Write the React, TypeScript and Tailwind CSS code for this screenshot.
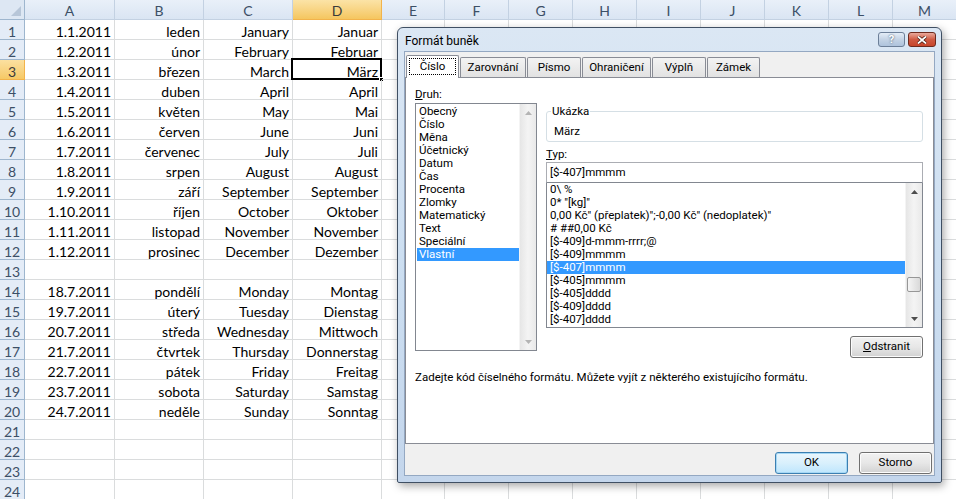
import React from "react";

const COLS = [
  { key: "A", w: "w-[90px]" },
  { key: "B", w: "w-[89px]" },
  { key: "C", w: "w-[89px]" },
  { key: "D", w: "w-[89px]" },
  { key: "E", w: "w-[63px]" },
  { key: "F", w: "w-[64px]" },
  { key: "G", w: "w-[64px]" },
  { key: "H", w: "w-[64px]" },
  { key: "I", w: "w-[64px]" },
  { key: "J", w: "w-[64px]" },
  { key: "K", w: "w-[64px]" },
  { key: "L", w: "w-[64px]" },
  { key: "M", w: "w-[64px]" },
];

const DATA: string[][] = [
  ["1.1.2011", "leden", "January", "Januar"],
  ["1.2.2011", "únor", "February", "Februar"],
  ["1.3.2011", "březen", "March", "März"],
  ["1.4.2011", "duben", "April", "April"],
  ["1.5.2011", "květen", "May", "Mai"],
  ["1.6.2011", "červen", "June", "Juni"],
  ["1.7.2011", "červenec", "July", "Juli"],
  ["1.8.2011", "srpen", "August", "August"],
  ["1.9.2011", "září", "September", "September"],
  ["1.10.2011", "říjen", "October", "Oktober"],
  ["1.11.2011", "listopad", "November", "November"],
  ["1.12.2011", "prosinec", "December", "Dezember"],
  [],
  ["18.7.2011", "pondělí", "Monday", "Montag"],
  ["19.7.2011", "úterý", "Tuesday", "Dienstag"],
  ["20.7.2011", "středa", "Wednesday", "Mittwoch"],
  ["21.7.2011", "čtvrtek", "Thursday", "Donnerstag"],
  ["22.7.2011", "pátek", "Friday", "Freitag"],
  ["23.7.2011", "sobota", "Saturday", "Samstag"],
  ["24.7.2011", "neděle", "Sunday", "Sonntag"],
  [],
  [],
  [],
  [],
];

const CATEGORIES = [
  "Obecný",
  "Číslo",
  "Měna",
  "Účetnický",
  "Datum",
  "Čas",
  "Procenta",
  "Zlomky",
  "Matematický",
  "Text",
  "Speciální",
  "Vlastní",
];

const FORMATS = [
  "0\\ %",
  '0* "[kg]"',
  '0,00 Kč" (přeplatek)";-0,00 Kč" (nedoplatek)"',
  "# ##0,00 Kč",
  "[$-409]d-mmm-rrrr;@",
  "[$-409]mmmm",
  "[$-407]mmmm",
  "[$-405]mmmm",
  "[$-405]dddd",
  "[$-409]dddd",
  "[$-407]dddd",
];

const TABS = [
  { label: "Číslo", w: "w-[53px]" },
  { label: "Zarovnání", w: "w-[66px]" },
  { label: "Písmo", w: "w-[54px]" },
  { label: "Ohraničení", w: "w-[69px]" },
  { label: "Výplň", w: "w-[54px]" },
  { label: "Zámek", w: "w-[53px]" },
];

function Arrow({ down, muted }: { down?: boolean; muted?: boolean }) {
  return (
    <svg width="7" height="4" viewBox="0 0 7 4" className={down ? "rotate-180" : ""}>
      <path d="M0 4 L3.5 0 L7 4 Z" fill={muted ? "#b4b4b4" : "#4d4d4d"} />
    </svg>
  );
}

function ScrollBar({ muted, thumb }: { muted?: boolean; thumb?: boolean }) {
  return (
    <div className="w-[17px] h-full flex flex-col bg-gradient-to-r from-[#e6e6e6] via-[#f4f4f4] to-[#e9e9e9] border-l border-[#f4f4f4]">
      <div className="h-[17px] flex items-center justify-center">
        <Arrow muted={muted} />
      </div>
      <div className="flex-1 flex flex-col justify-end pb-[18px]">
        {thumb && (
          <div className="mx-[1px] h-[15px] rounded-[2px] border border-[#979797] bg-gradient-to-r from-[#f5f5f5] to-[#d9d9d9]" />
        )}
      </div>
      <div className="h-[17px] flex items-center justify-center">
        <Arrow down muted={muted} />
      </div>
    </div>
  );
}

function WinButton({ children, focused, className = "" }: { children: React.ReactNode; focused?: boolean; className?: string }) {
  return (
    <div
      className={`w-[73px] h-[22px] rounded-[3px] border flex items-center justify-center text-black ${
        focused
          ? "border-[#3c7fb1] bg-gradient-to-b from-[#eaf6fd] via-[#d9f0fc] to-[#bee6fd] shadow-[inset_0_0_0_1px_#a6d8f5]"
          : "border-[#707070] bg-gradient-to-b from-[#f2f2f2] via-[#e7e7e7] to-[#d2d2d2] shadow-[inset_0_0_0_1px_#fcfcfc]"
      } ${className}`}
    >
      {children}
    </div>
  );
}

function Sheet() {
  return (
    <div className="flex flex-col font-['Lato',sans-serif] text-[14px] text-black">
      <div className="flex h-[20px]">
        <div className="w-[25px] shrink-0 border-r border-b border-[#9eb6ce] bg-[#dde7f3] flex items-end justify-end p-[3px]">
          <svg width="10" height="10" viewBox="0 0 10 10">
            <path d="M10 0 L10 10 L0 10 Z" fill="#b7c6d8" />
          </svg>
        </div>
        {COLS.map((c) => (
          <div
            key={c.key}
            className={`${c.w} shrink-0 border-r border-b text-center leading-[21px] ${
              c.key === "D"
                ? "bg-gradient-to-b from-[#fbe3a6] to-[#f5c65e] border-[#f2b34b] text-[#3b3b3b]"
                : "bg-gradient-to-b from-[#e9f0f9] to-[#dae5f3] border-[#c3d1e2] text-[#3c4f66]"
            }`}
          >
            {c.key}
          </div>
        ))}
      </div>
      {DATA.map((row, r) => (
        <div key={r} className="flex h-[20px]">
          <div
            className={`w-[25px] shrink-0 border-r border-b text-center leading-[23px] ${
              r === 2
                ? "bg-gradient-to-b from-[#fbe0a0] to-[#f6c965] border-[#f2b34b] text-[#3b3b3b]"
                : "bg-[#e4ecf7] border-[#9eb6ce] text-[#3c4f66]"
            }`}
          >
            {r + 1}
          </div>
          {COLS.map((c, ci) => (
            <div
              key={c.key}
              className={`${c.w} shrink-0 relative border-r border-b border-[#dadcdd] text-right pr-[3px] leading-[23px] whitespace-nowrap`}
            >
              {row[ci] ?? ""}
              {r === 2 && c.key === "D" && (
                <>
                  <div className="absolute -left-[2px] -top-[2px] -right-[1px] -bottom-[1px] border-2 border-black" />
                  <div className="absolute -right-[3px] -bottom-[3px] w-[5px] h-[5px] bg-black border border-white" />
                </>
              )}
            </div>
          ))}
        </div>
      ))}
    </div>
  );
}

function FormatDialog() {
  return (
    <div className="absolute left-[397px] top-[27px] w-[545px] h-[456px] flex flex-col rounded-t-[6px] rounded-b-[2px] border border-[#3f4f63] bg-gradient-to-b from-[#dbe7f4] via-[#cddff1] to-[#c4d6ec] shadow-[2px_3px_8px_rgba(0,0,0,0.35)] font-['Roboto',sans-serif] text-[11.5px] text-black">
      <div className="h-[23px] flex items-start pl-[7px] pr-[5px]">
        <div className="flex-1 leading-[26px] text-[12px]">Formát buněk</div>
        <div className="flex gap-[3px] pt-[4px]">
          <div className="w-[27px] h-[15px] rounded-[3px] border border-[#6c7f98] bg-gradient-to-b from-[#e4edf7] via-[#c4d3e5] to-[#aec3dc] flex items-center justify-center text-white font-bold text-[11px] leading-none [text-shadow:0_0_2px_#2b3d55]">
            ?
          </div>
          <div className="w-[28px] h-[15px] rounded-[3px] border border-[#6d2a1e] bg-gradient-to-b from-[#e9a99c] via-[#cf5a43] to-[#c7452b] flex items-center justify-center">
            <svg width="10" height="8" viewBox="0 0 10 8">
              <path d="M1 0.5 L9 7.5 M9 0.5 L1 7.5" stroke="#3a1209" strokeWidth="3.2" />
              <path d="M1 0.5 L9 7.5 M9 0.5 L1 7.5" stroke="#ffffff" strokeWidth="1.8" />
            </svg>
          </div>
        </div>
      </div>

      <div className="flex-1 mx-[6px] mb-[6px] border border-[#94a8c2] bg-[#f0f0f0] flex flex-col pt-[3px]">
        <div className="flex items-end h-[22px] pl-[1px] gap-[1px]">
          {TABS.map((t, i) =>
            i === 0 ? (
              <div
                key={t.label}
                className={`${t.w} h-[23px] -mb-[1px] relative z-10 bg-white border border-b-0 border-[#898c95] rounded-t-[2px] p-[2px] pb-[3px]`}
              >
                <div className="h-full border border-dotted border-black flex items-center justify-center">
                  {t.label}
                </div>
              </div>
            ) : (
              <div
                key={t.label}
                className={`${t.w} h-[20px] bg-gradient-to-b from-[#f3f3f3] to-[#e2e2e2] border border-b-0 border-[#898c95] rounded-t-[2px] flex items-center justify-center`}
              >
                {t.label}
              </div>
            )
          )}
        </div>

        <div className="h-[367px] bg-white border border-[#898c95] pl-[9px] pt-[9px] flex flex-col">
          <div className="flex gap-[9px]">
            <div className="w-[122px] flex flex-col">
              <div className="h-[15px] leading-[15px]">
                <span className="underline">D</span>ruh:
              </div>
              <div className="mt-[1px] h-[248px] border border-[#828790] flex">
                <div className="flex-1 pt-[1px]">
                  {CATEGORIES.map((c, i) => (
                    <div
                      key={c}
                      className={`h-[13px] leading-[13px] ml-[1px] pl-[2px] whitespace-nowrap ${
                        i === CATEGORIES.length - 1 ? "bg-[#3399ff] text-white" : ""
                      }`}
                    >
                      {c}
                    </div>
                  ))}
                </div>
                <ScrollBar muted />
              </div>
            </div>

            <div className="w-[377px] flex flex-col">
              <fieldset className="mt-[17px] border border-[#d5dfe5] rounded-[3px] px-[4px] pb-[3px]">
                <legend className="px-[1px] leading-[14px]">Ukázka</legend>
                <div className="pl-[3px] mt-[6px] leading-[14px]">März</div>
              </fieldset>
              <div className="mt-[5px] h-[14px] leading-[14px]">
                <span className="underline">T</span>yp:
              </div>
              <div className="mt-[1px] h-[21px] border border-[#abadb3] border-b-[#828790] pl-[3px] leading-[19px]">
                [$-407]mmmm
              </div>
              <div className="h-[145px] border-x border-b border-[#828790] flex">
                <div className="flex-1 overflow-hidden">
                  {FORMATS.map((f, i) => (
                    <div
                      key={f}
                      className={`h-[13px] leading-[13px] pl-[3px] whitespace-nowrap ${
                        i === 6 ? "bg-[#3399ff] text-white" : ""
                      }`}
                    >
                      {f}
                    </div>
                  ))}
                </div>
                <ScrollBar thumb />
              </div>
              <div className="flex justify-end mt-[8px]">
                <WinButton>
                  <span className="underline">O</span>dstranit
                </WinButton>
              </div>
            </div>
          </div>
          <div className="mt-[12px] leading-[14px]">
            Zadejte kód číselného formátu. Můžete vyjít z některého existujícího formátu.
          </div>
        </div>

        <div className="flex justify-end gap-[11px] pr-[2px] pt-[8px]">
          <WinButton focused>OK</WinButton>
          <WinButton>Storno</WinButton>
        </div>
      </div>
    </div>
  );
}

export default function App() {
  return (
    <div className="relative w-[956px] h-[499px] overflow-hidden bg-white">
      <Sheet />
      <FormatDialog />
    </div>
  );
}
